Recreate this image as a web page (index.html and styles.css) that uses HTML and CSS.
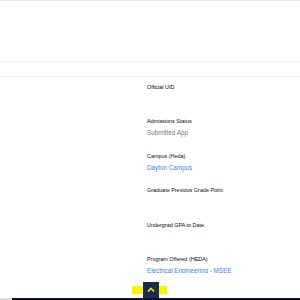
FILE: index.html
```html
<!DOCTYPE html>
<html lang="en">
<head>
  <meta charset="UTF-8">
  <meta name="viewport" content="width=device-width, initial-scale=1.0">
  <title>Record Detail</title>
  <link rel="stylesheet" href="styles.css">
</head>
<body>
  <div class="page">
    <div class="header"></div>
    <div class="strip"></div>

    <div class="details">
      <div class="col-left"></div>
      <div class="col-right">
        <div class="field">
          <div class="label">Official UID</div>
          <div class="value"></div>
        </div>
        <div class="field">
          <div class="label">Admissions Status</div>
          <div class="value muted">Submitted App</div>
        </div>
        <div class="field">
          <div class="label">Campus (Heda)</div>
          <div class="value link">Dayton Campus</div>
        </div>
        <div class="field">
          <div class="label">Graduate Previous Grade Point</div>
          <div class="value"></div>
        </div>
        <div class="field">
          <div class="label">Undergrad GPA to Date</div>
          <div class="value"></div>
        </div>
        <div class="field">
          <div class="label">Program Offered (HEDA)</div>
          <div class="value link">Electrical Engineering - MSEE</div>
        </div>
      </div>
    </div>
  </div>

  <!-- back to top -->
  <div class="highlight"></div>
  <button class="top-btn" title="Back to top">
    <svg width="8" height="6" viewBox="0 0 8 6">
      <polyline points="1,4.5 4,1.5 7,4.5" fill="none" stroke="#f2f200" stroke-width="1.6"/>
    </svg>
  </button>

  <div class="bottom-bar">
    <div class="bar-track"></div>
    <div class="bar-thumb"></div>
  </div>
</body>
</html>
```

FILE: styles.css
```css
body {
  margin: 0;
  background-color: #fff;
  font-family: "Liberation Sans", Arial, sans-serif;
  color: #080707;
  overflow: hidden;
}

.page {
  height: 273px;
  overflow: hidden;
}

.header {
  height: 60px;
  border-top: 1px solid #e6e6e6;
  border-bottom: 1px solid #f0f0f0;
}

.strip {
  height: 14px;
  border-bottom: 1px solid #f0f0f0;
}

.details {
  display: flex;
  padding-top: 6px;
}

.col-left {
  width: 147px;
}

.col-right {
  flex: 1;
}

.field {
  height: 34.4px;
}

.label {
  font-size: 5.45px;
  line-height: 8px;
  color: #080707;
}

.value {
  margin-top: 3px;
  font-size: 6.3px;
  line-height: 9px;
}

.value.muted {
  color: #7a7876;
}

.value.link {
  color: #3b82d9;
}

.highlight {
  position: fixed;
  left: 132px;
  top: 286px;
  width: 35px;
  height: 8px;
  background-color: #f5f500;
}

.top-btn {
  position: fixed;
  left: 143px;
  top: 282px;
  width: 16px;
  height: 16px;
  padding: 0;
  border: none;
  background-color: #1c2b4b;
  display: flex;
  align-items: center;
  justify-content: center;
  cursor: pointer;
}

.bottom-bar {
  position: fixed;
  left: 0;
  right: 0;
  bottom: 0;
  height: 2px;
  display: flex;
}

.bar-track {
  width: 12px;
  background-color: #dcdcdc;
}

.bar-thumb {
  flex: 1;
  background-color: #0c1420;
}
```
